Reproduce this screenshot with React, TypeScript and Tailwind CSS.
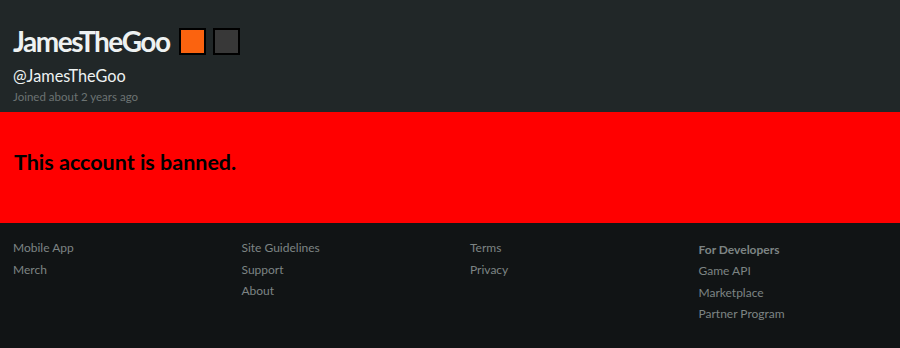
export default function App() {
  const cols: { title?: string; items: string[] }[] = [
    { items: ["Mobile App", "Merch"] },
    { items: ["Site Guidelines", "Support", "About"] },
    { items: ["Terms", "Privacy"] },
    { title: "For Developers", items: ["Game API", "Marketplace", "Partner Program"] },
  ];
  return (
    <div className="w-[900px] h-[348px] bg-[#111415] flex flex-col" style={{ fontFamily: "Lato, 'Noto Sans', sans-serif" }}>
      <div className="h-[112px] shrink-0 bg-[#212728] px-[13px] pt-[24px]">
        <div className="flex items-center gap-[7px] h-[34px]">
          <span className="text-[28px] leading-[34px] font-bold text-[#eef2f2] tracking-[-1.5px] mr-[2px]">JamesTheGoo</span>
          <span className="w-[27px] h-[27px] shrink-0 bg-[#fb630f] border-2 border-black" />
          <span className="w-[27px] h-[27px] shrink-0 bg-[#383838] border-2 border-black" />
        </div>
        <div className="mt-[8px] text-[16.3px] leading-[20px] text-[#eef2f2]">@JamesTheGoo</div>
        <div className="mt-[3px] text-[11.5px] leading-[15px] text-[#6c7373]">Joined about 2 years ago</div>
      </div>
      <div className="h-[111px] shrink-0 bg-[#ff0000] px-[14px] flex items-center">
        <span className="text-[21.5px] font-bold text-black leading-[26px] mt-[-12px]">This account is banned.</span>
      </div>
      <div className="grid grid-cols-4 gap-x-10 px-[13px] pt-[14px]">
        {cols.map((c, i) => (
          <div key={i} className="flex flex-col">
            {c.title && (
              <div className="text-[12px] font-bold text-[#7d8484] leading-[20px] mt-[3px]">{c.title}</div>
            )}
            {c.items.map((it) => (
              <div key={it} className="text-[12px] text-[#7d8484] leading-[21.5px]">{it}</div>
            ))}
          </div>
        ))}
      </div>
    </div>
  );
}
